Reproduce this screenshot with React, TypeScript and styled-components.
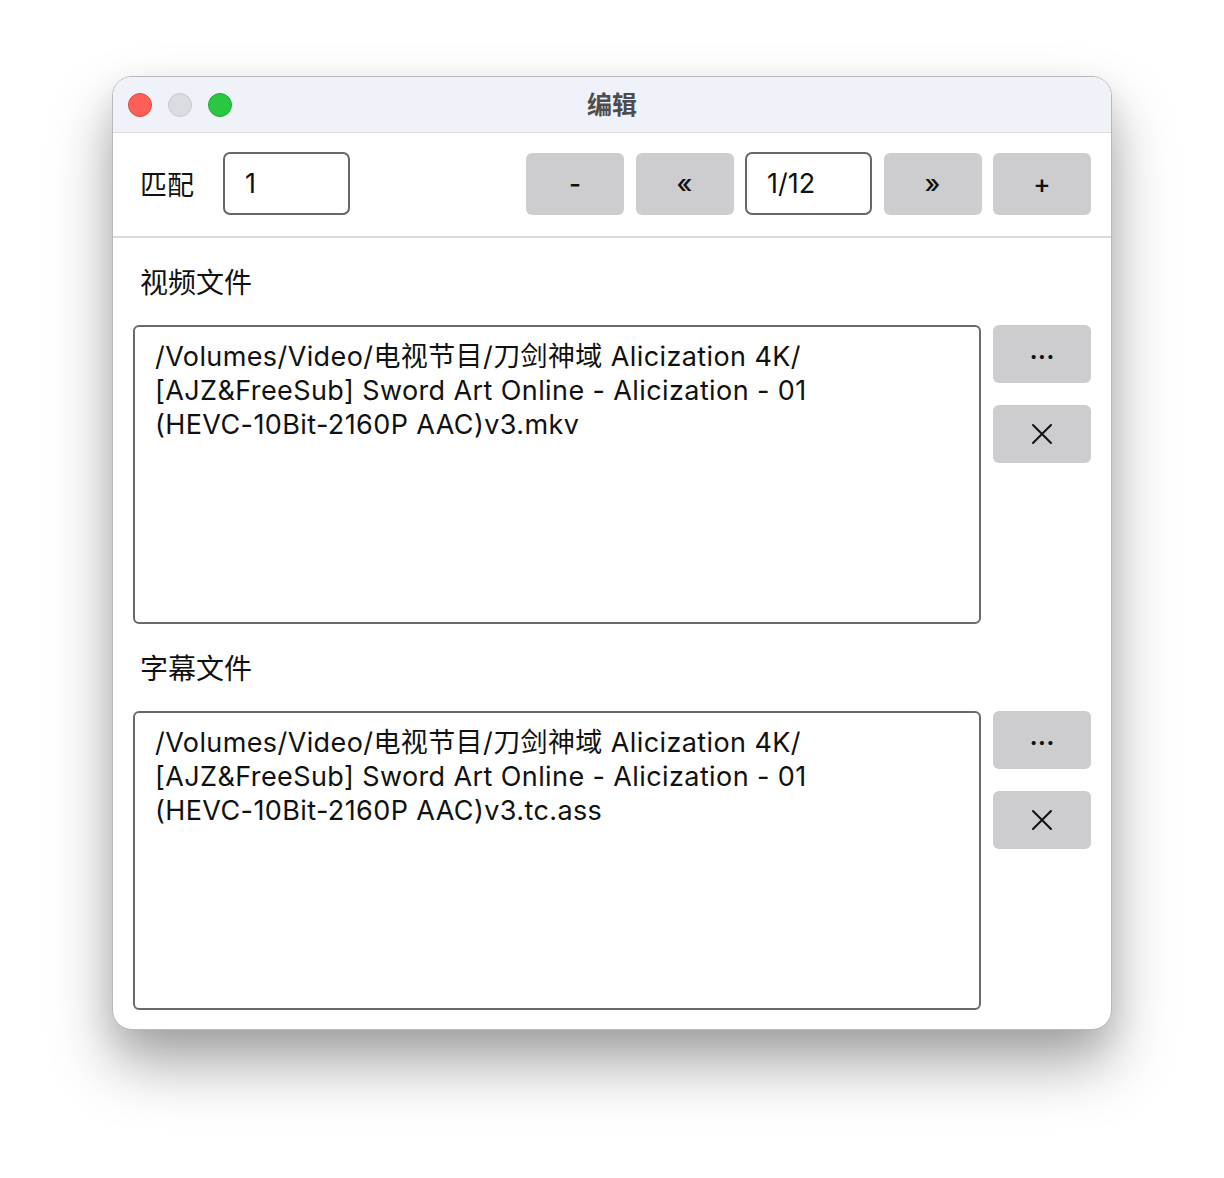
import React from "react";
import styled, { createGlobalStyle } from "styled-components";

const Global = createGlobalStyle`
  html, body { margin: 0; padding: 0; background: #ffffff; }
  body { font-family: Inter, "Noto Sans CJK SC", sans-serif; }
  * { box-sizing: border-box; }
`;

const Page = styled.div`
  display: flex;
  justify-content: center;
  padding-top: 76px;
  height: 1178px;
`;

const Window = styled.div`
  width: 1000px;
  height: 954px;
  border: 1px solid #b9b9b9;
  border-radius: 20px;
  background: #ffffff;
  overflow: hidden;
  display: flex;
  flex-direction: column;
  box-shadow: 0 34px 60px rgba(0, 0, 0, 0.34), 0 10px 30px rgba(0, 0, 0, 0.08);
`;

const TitleBar = styled.div`
  height: 56px;
  flex: none;
  background: #eff3f9;
  border-bottom: 1px solid #dcdcdc;
  display: flex;
  align-items: center;
  padding-left: 15px;
  position: relative;
`;

const Lights = styled.div`
  display: flex;
  gap: 16px;
`;

const Light = styled.span<{ $c: string; $b: string }>`
  width: 24px;
  height: 24px;
  border-radius: 50%;
  background: ${(p) => p.$c};
  border: 1px solid ${(p) => p.$b};
`;

const Title = styled.div`
  position: absolute;
  left: 0;
  right: 0;
  top: 0;
  bottom: 4px;
  display: flex;
  align-items: center;
  justify-content: center;
  font-family: "Noto Sans CJK SC", sans-serif;
  font-weight: 700;
  font-size: 25px;
  color: #4d4d4d;
  pointer-events: none;
`;

const Toolbar = styled.div`
  flex: none;
  height: 105px;
  display: flex;
  align-items: center;
  padding: 0 20px 2px 27px;
  border-bottom: 2px solid #d9d9d9;
`;

const Label = styled.span`
  font-family: "Noto Sans CJK SC", sans-serif;
  font-size: 27px;
  color: #111;
`;

const Field = styled.input`
  width: 127px;
  height: 63px;
  border: 2px solid #676767;
  border-radius: 7px;
  padding: 0 20px;
  font-family: Inter, sans-serif;
  font-size: 27px;
  color: #111;
  background: #fff;
  outline: none;
`;

const MatchField = styled(Field)`
  margin-left: 29px;
`;

const Spacer = styled.div`
  flex: 1;
`;

const Nav = styled.div`
  display: flex;
  gap: 11.5px;
  align-items: center;
`;

const Btn = styled.button<{ $h?: number }>`
  width: 98px;
  height: ${(p) => p.$h ?? 62}px;
  border: none;
  border-radius: 6px;
  background: #cdcdcf;
  display: flex;
  align-items: center;
  justify-content: center;
  font-family: Inter, sans-serif;
  font-size: 26px;
  font-weight: 500;
  color: #111;
  padding: 0;
  cursor: pointer;
`;

const Body = styled.div`
  flex: 1;
  display: flex;
  flex-direction: column;
  padding: 0 20px;
`;

const SectionLabel = styled.div`
  font-family: "Noto Sans CJK SC", sans-serif;
  font-size: 28px;
  line-height: 36px;
  color: #111;
  padding-left: 7px;
  margin: 25px 0 26px;
`;

const Row = styled.div`
  display: flex;
  gap: 12px;
  align-items: flex-start;
`;

const Area = styled.textarea`
  flex: 1;
  height: 299px;
  border: 2px solid #6a6a6a;
  border-radius: 6px;
  padding: 13px 20px 11px;
  font-family: Inter, "Noto Sans CJK SC", sans-serif;
  font-size: 27px;
  letter-spacing: 0.4px;
  line-height: 34px;
  color: #111;
  resize: none;
  outline: none;
  background: #fff;
`;

const Side = styled.div`
  display: flex;
  flex-direction: column;
  gap: 22px;
`;

const Dots = styled.span`
  font-size: 26px;
  font-weight: 600;
  line-height: 1;
  transform: translateY(-4px);
`;

const CloseIcon = () => (
  <svg width="22" height="22" viewBox="0 0 22 22" fill="none">
    <path d="M2 2 L20 20 M20 2 L2 20" stroke="#111" strokeWidth="2" strokeLinecap="round" />
  </svg>
);

const videoPath =
  "/Volumes/Video/电视节目/刀剑神域 Alicization 4K/\n[AJZ&FreeSub] Sword Art Online - Alicization - 01\n(HEVC-10Bit-2160P AAC)v3.mkv";
const subPath =
  "/Volumes/Video/电视节目/刀剑神域 Alicization 4K/\n[AJZ&FreeSub] Sword Art Online - Alicization - 01\n(HEVC-10Bit-2160P AAC)v3.tc.ass";

const FileSection = ({ label, value }: { label: string; value: string }) => (
  <>
    <SectionLabel>{label}</SectionLabel>
    <Row>
      <Area readOnly value={value} />
      <Side>
        <Btn $h={58}>
          <Dots>...</Dots>
        </Btn>
        <Btn $h={58}>
          <CloseIcon />
        </Btn>
      </Side>
    </Row>
  </>
);

export default function App() {
  return (
    <>
      <Global />
      <Page>
        <Window>
          <TitleBar>
            <Lights>
              <Light $c="#fe5f57" $b="#e2463f" />
              <Light $c="#d9dce0" $b="#c4c7cb" />
              <Light $c="#2ac840" $b="#1ea932" />
            </Lights>
            <Title>编辑</Title>
          </TitleBar>
          <Toolbar>
            <Label>匹配</Label>
            <MatchField readOnly value="1" />
            <Spacer />
            <Nav>
              <Btn>-</Btn>
              <Btn>«</Btn>
              <Field readOnly value="1/12" />
              <Btn>»</Btn>
              <Btn>+</Btn>
            </Nav>
          </Toolbar>
          <Body>
            <FileSection label="视频文件" value={videoPath} />
            <FileSection label="字幕文件" value={subPath} />
          </Body>
        </Window>
      </Page>
    </>
  );
}
